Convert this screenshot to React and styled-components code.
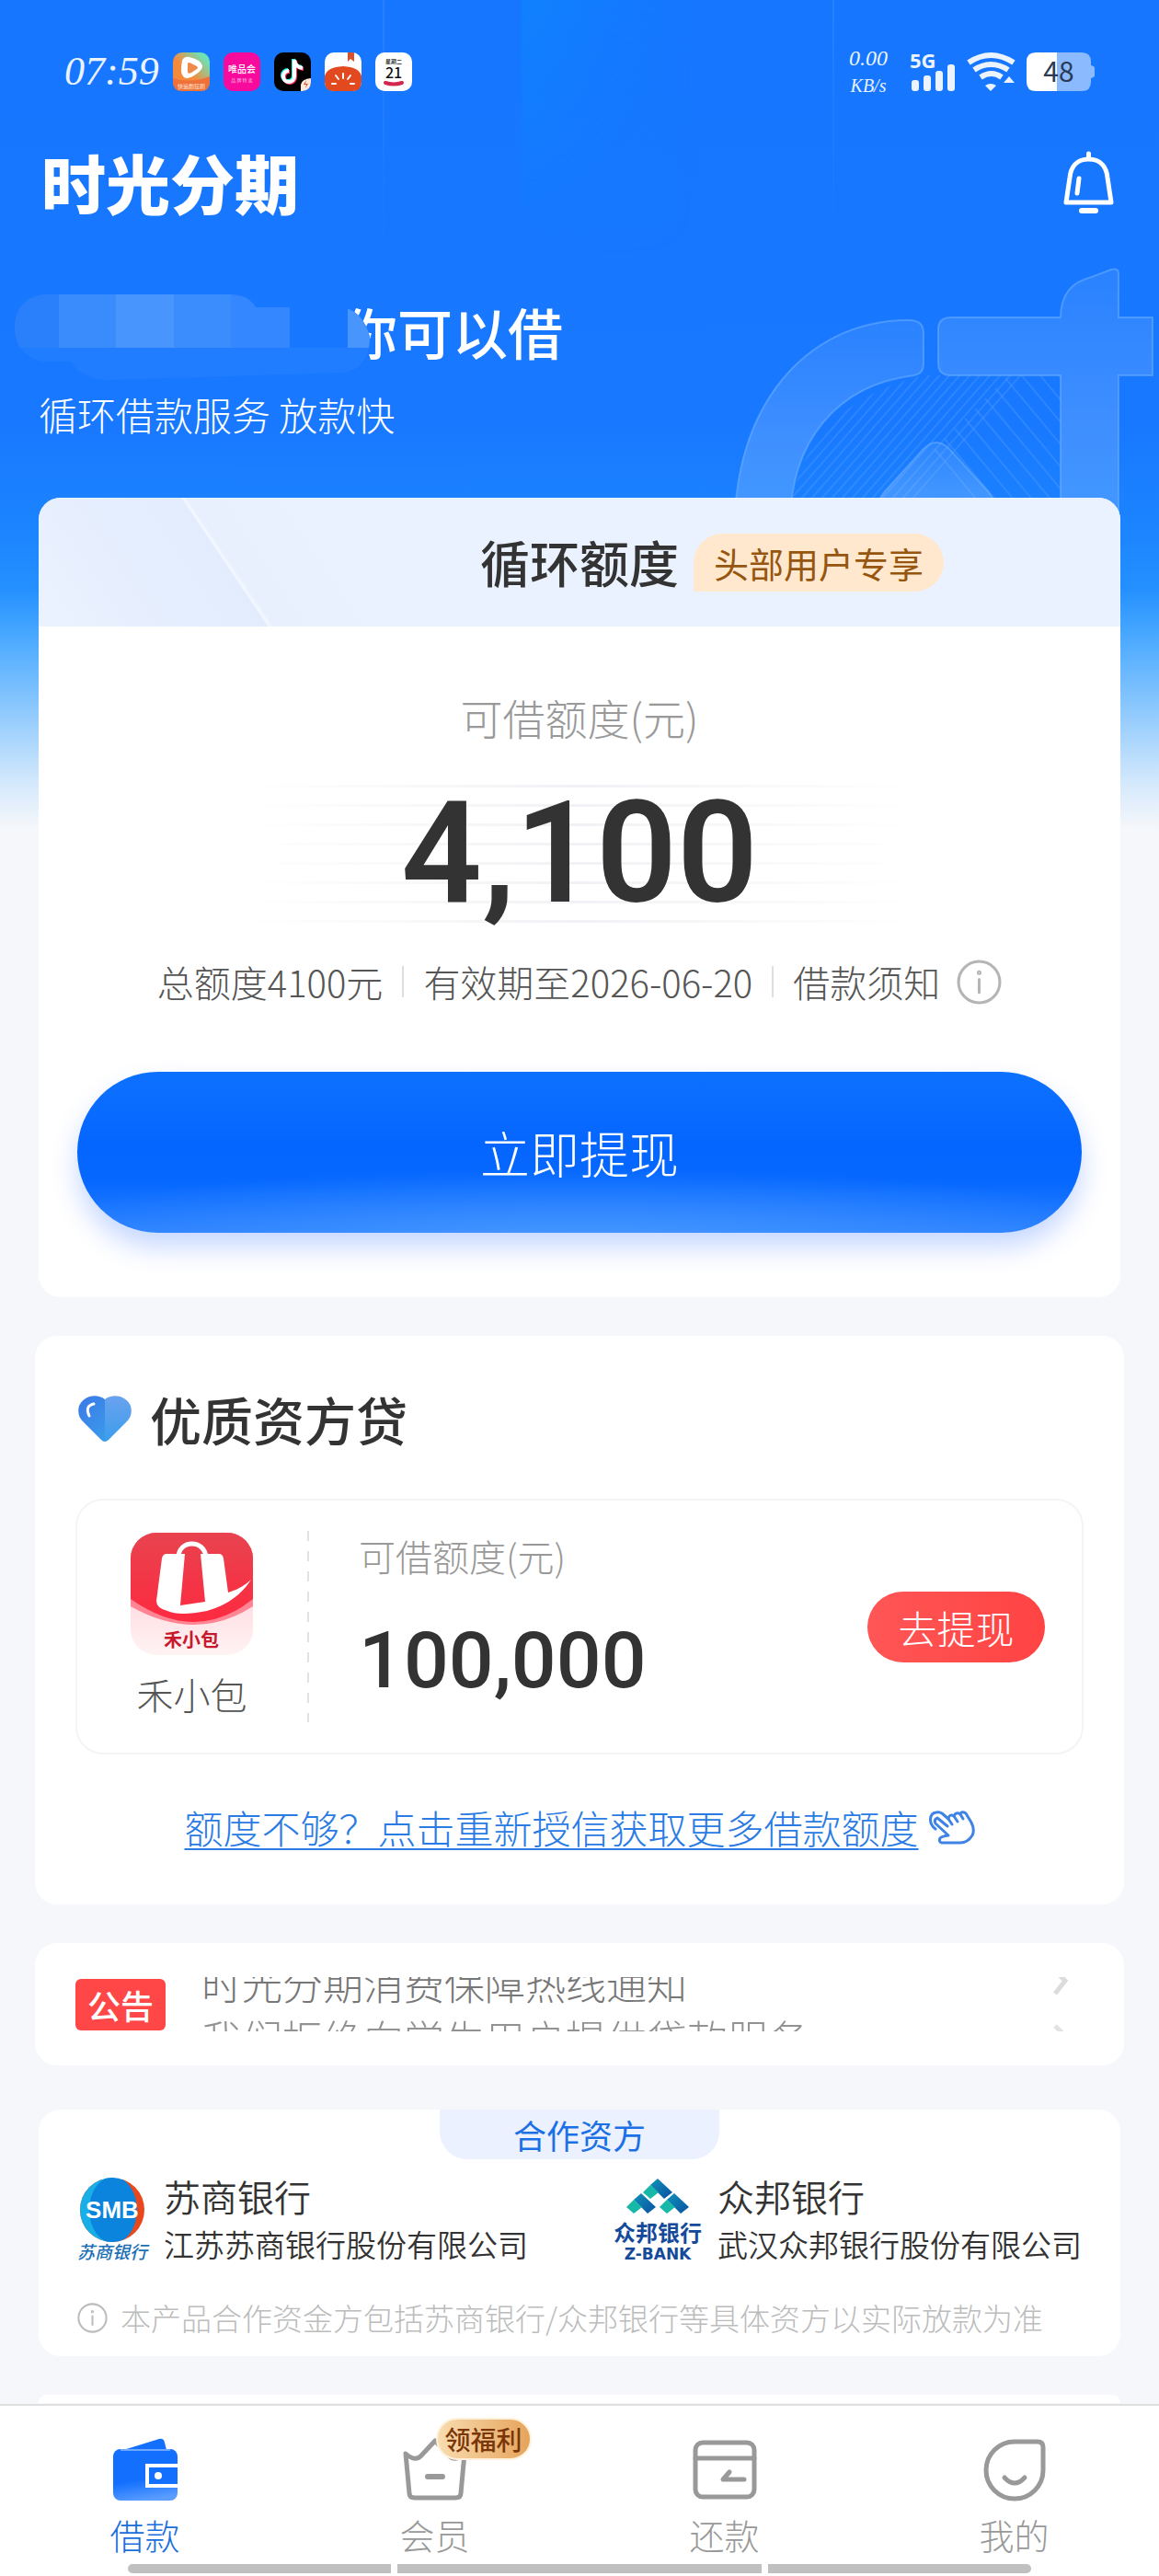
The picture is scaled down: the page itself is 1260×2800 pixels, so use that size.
import React from 'react';
import styled, { createGlobalStyle } from 'styled-components';

const GlobalStyle = createGlobalStyle`
  * {
    box-sizing: border-box;
  }

  body {
    margin: 0;
    background: #f5f7fa;
    color: #333333;
    font-family: 'Noto Sans CJK SC', sans-serif;
  }

  h1, h2, p {
    margin: 0;
    font-weight: 400;
  }

  a {
    color: inherit;
    text-decoration: none;
  }

  button {
    padding: 0;
    border: 0;
    background: none;
    color: inherit;
    font: inherit;
    cursor: pointer;
  }

  svg {
    display: block;
    flex: none;
    overflow: visible;
  }
`;

/* ---------- icons ---------- */

function VideoAppIcon() {
  return (
    <svg width="40" height="42" viewBox="0 0 40 42">
      <defs>
        <linearGradient id="video" x1="0" y1="1" x2="1" y2="0">
          <stop offset="0.45" stopColor="#f58a3c" />
          <stop offset="0.85" stopColor="#6fe0b4" />
        </linearGradient>
      </defs>
      <rect width="40" height="42" rx="10" fill="url(#video)" />
      <path d="M0 28q20 6 40-2v6q0 10-10 10H10Q0 42 0 32z" fill="#f0703a" />
      <path d="M10 9q2-5 8-4 12 3 14 9 1 4-6 9-9 7-14 4-5-4-2-18z" fill="#fff" />
      <path d="M16 12q1-2 4 0l6 3q2 2 0 3l-6 4q-4 2-4-1z" fill="#f08a4a" />
      <text x="20" y="39" textAnchor="middle" fontSize="6" fill="#ffe6d2">快追剧狂刷</text>
    </svg>
  );
}

function VipAppIcon() {
  return (
    <svg width="40" height="42" viewBox="0 0 40 42">
      <rect width="40" height="42" rx="10" fill="#f80a9c" />
      <text x="20" y="22" textAnchor="middle" fontSize="10" fontWeight="500" fill="#fff">唯品会</text>
      <text x="20" y="32" textAnchor="middle" fontSize="5" fill="#ffc4ea">品 牌 特 卖</text>
    </svg>
  );
}

function TiktokAppIcon() {
  const note = 'M22 8v18a6 6 0 1 1-6-6M22 8q1 8 9 9';
  return (
    <svg width="40" height="42" viewBox="0 0 40 42" fill="none" strokeWidth="4">
      <rect width="40" height="42" rx="10" fill="#000" />
      <path d={note} stroke="#25f4ee" transform="translate(-1 -1)" />
      <path d={note} stroke="#fe2c55" transform="translate(1 1)" />
      <path d={note} stroke="#fff" />
      <path d="M29 42v-7q1-6 11-7v4q0 9-9 10z" fill="#ffe9dd" />
      <path d="M35 30l-3 5h3l-1 4 3-5h-3z" fill="#e0522e" />
    </svg>
  );
}

function TomatoAppIcon() {
  return (
    <svg width="40" height="42" viewBox="0 0 40 42">
      <rect width="40" height="42" rx="10" fill="#fff" />
      <path d="M25 0h7v10l-4-3-3 3z" fill="#d8502c" />
      <path d="M0 26q2-10 20-11 18 1 20 11v6q0 10-10 10H10Q0 42 0 32z" fill="#e2491f" />
      <g stroke="#fff" strokeWidth="2" strokeLinecap="round">
        <path d="M20 23v5M12 25l3 4M28 25l-3 4M8 34h4M28 34h4" />
      </g>
    </svg>
  );
}

function CalendarAppIcon() {
  return (
    <svg width="40" height="42" viewBox="0 0 40 42">
      <rect width="40" height="42" rx="10" fill="#fff" />
      <text x="20" y="12" textAnchor="middle" fontSize="6" fontWeight="500" fill="#222">星期二</text>
      <text x="20" y="28" textAnchor="middle" fontSize="16" fontWeight="500" fill="#111">21</text>
      <path d="M11 33q9 3 18 0" stroke="#d3274f" strokeWidth="4" strokeLinecap="round" fill="none" />
    </svg>
  );
}

function SignalIcon() {
  return (
    <svg width="50" height="42" viewBox="0 0 50 42" fill="#eaf3ff">
      <text x="0" y="17" fontSize="22" fontWeight="700" fontFamily="'Open Sans', sans-serif">5G</text>
      <rect x="2" y="30" width="8" height="12" rx="3" />
      <rect x="15" y="25" width="8" height="17" rx="3" />
      <rect x="28" y="20" width="8" height="22" rx="3" />
      <rect x="41" y="13" width="8" height="29" rx="3" />
    </svg>
  );
}

function WifiIcon() {
  return (
    <svg width="53" height="42" viewBox="0 0 53 42" fill="none" stroke="#eaf3ff" strokeWidth="6">
      <path d="M2 11q24-16 49 0" />
      <path d="M8 19q18-12 37 0" />
      <path d="M15 27q12-8 23 0" />
      <path d="M20 36q6-4 12 0l-6 6z" fill="#eaf3ff" stroke="none" />
      <path d="M46 26l6 7H40z" fill="#eaf3ff" stroke="none" />
    </svg>
  );
}

function BatteryIcon() {
  return (
    <svg width="74" height="42" viewBox="0 0 74 42">
      <path d="M33 0h27q10 0 10 10v4q4 1 4 3v8q0 2-4 3v4q0 10-10 10H33z" fill="#8bbaff" />
      <path d="M33 0H10Q0 0 0 10v22q0 10 10 10h23z" fill="#fff" />
      <text x="35" y="32" textAnchor="middle" fontSize="30" fill="#2b3a55">48</text>
    </svg>
  );
}

function BellIcon() {
  return (
    <svg width="55" height="68" viewBox="0 0 55 68" fill="none" stroke="#fff" strokeWidth="5" strokeLinecap="round" strokeLinejoin="round">
      <path d="M27.500 3v5" />
      <path d="M27.500 9C14 9 8 18 7 29L3 56h49l-4-27C47 18 41 9 27.500 9z" />
      <path d="M17 30l-2 16" />
      <path d="M20 65h15" strokeWidth="6" />
    </svg>
  );
}

function InfoIcon({ size, color }) {
  return (
    <svg width={size} height={size} viewBox="0 0 48 48" fill="none" stroke={color} strokeWidth="3" strokeLinecap="round">
      <circle cx="24" cy="24" r="22" />
      <path d="M24 21v14" />
      <circle cx="24" cy="14" r="1" />
    </svg>
  );
}

function HeartIcon() {
  return (
    <svg width="58" height="50" viewBox="0 0 58 50">
      <defs>
        <linearGradient id="heartLeft" x1="0" y1="0" x2="0.600" y2="1">
          <stop offset="0" stopColor="#3c78e6" />
          <stop offset="1" stopColor="#3a97ea" />
        </linearGradient>
        <linearGradient id="heartRight" x1="0" y1="0" x2="0" y2="1">
          <stop offset="0" stopColor="#6aa2ee" />
          <stop offset="1" stopColor="#3a9dec" />
        </linearGradient>
      </defs>
      <path d="M29 4C20-3 6 0 1 11c-2 8 0 13 5 18l19 19q2 2 4 2z" fill="url(#heartLeft)" />
      <path d="M29 4c9-7 23-4 28 7 2 8 0 13-5 18L33 48q-2 2-4 2z" fill="url(#heartRight)" />
      <path d="M17 9q-10 2-5 13" fill="none" stroke="#fff" strokeWidth="3" strokeLinecap="round" />
    </svg>
  );
}

function BagLogo() {
  return (
    <svg width="133" height="133" viewBox="0 0 133 133">
      <defs>
        <clipPath id="bagClip">
          <rect width="133" height="133" rx="28" />
        </clipPath>
        <linearGradient id="bagRed" x1="0" y1="0" x2="0" y2="1">
          <stop offset="0" stopColor="#e8434f" />
          <stop offset="1" stopColor="#fd2a40" />
        </linearGradient>
        <linearGradient id="bagPink" x1="0" y1="0" x2="0" y2="1">
          <stop offset="0.600" stopColor="#ffdfe3" />
          <stop offset="1" stopColor="#fff3f4" />
        </linearGradient>
      </defs>
      <g clipPath="url(#bagClip)">
        <rect width="133" height="133" fill="url(#bagPink)" />
        <path d="M0 0h133v80q-62 40-133 0z" fill="#ff8494" />
        <path d="M0 0h133v72q-62 50-133 0z" fill="url(#bagRed)" />
        <path d="M52 27c0-20 29-20 30 0" fill="none" stroke="#fff" strokeWidth="5" />
        <path d="M39 23h20l-5 56 27-4-5-52h20q4 0 5 5l5 37q14-4 25-14-16 25-48 34-30 6-43 0-12-3-12-11l6-46q1-5 5-5z" fill="#fff" />
      </g>
      <text x="66" y="124" textAnchor="middle" fontSize="20" fontWeight="700" fill="#c9182b">禾小包</text>
    </svg>
  );
}

function HandIcon() {
  return (
    <svg width="50" height="37" viewBox="0 0 50 37" fill="none" stroke="#3f83e6" strokeWidth="3" strokeLinecap="round" strokeLinejoin="round">
      <path d="M7 20C-1 14 0 3 8 2q3-1 6 1l7 6q1-6 6-3 2-5 7-2 1-4 6-1l6 10q4 8 1 14-5 8-13 8H14q-4-1-2-5 2-2 9-3L7 14q-2-4 2-6l11 9" />
      <path d="M21 9l4 6M27 6l4 6M34 4l3 5" />
    </svg>
  );
}

function SmbLogo() {
  return (
    <svg width="78" height="90" viewBox="0 0 78 90">
      <defs>
        <clipPath id="smbClip">
          <circle cx="38" cy="33" r="35" />
        </clipPath>
      </defs>
      <g clipPath="url(#smbClip)">
        <rect width="78" height="70" fill="#e8481c" />
        <ellipse cx="30" cy="33" rx="30" ry="37" fill="#18aee8" />
        <ellipse cx="39" cy="33" rx="26" ry="36" fill="#0a84dc" />
      </g>
      <text x="38" y="42" textAnchor="middle" fontSize="26" fontWeight="700" fontFamily="'Liberation Sans', sans-serif" fill="#fff">SMB</text>
      <text x="38" y="86" textAnchor="middle" fontSize="19" fontStyle="italic" fontWeight="500" fill="#1a6fb4">苏商银行</text>
    </svg>
  );
}

function ZBankLogo() {
  return (
    <svg width="98" height="88" viewBox="0 0 98 88">
      <defs>
        <linearGradient id="roofBlue" x1="0" y1="0" x2="1" y2="1">
          <stop offset="0" stopColor="#0f93b8" />
          <stop offset="1" stopColor="#0b4fa2" />
        </linearGradient>
        <g id="roof">
          <path d="M16 0L32 15l-9 7L8 7z" fill="url(#roofBlue)" />
          <path d="M8 7l9 8-9 7-8-7z" fill="#17b8a8" />
        </g>
      </defs>
      <use href="#roof" x="33" y="-2" />
      <use href="#roof" x="15" y="14" />
      <use href="#roof" x="51" y="14" />
      <text x="49" y="66" textAnchor="middle" fontSize="24" fontWeight="700" fill="#154a9a">众邦银行</text>
      <text x="49" y="86" textAnchor="middle" fontSize="17" fontWeight="700" fontFamily="'DejaVu Sans', sans-serif" fill="#154a9a">Z-BANK</text>
    </svg>
  );
}

function WalletIcon() {
  return (
    <svg width="70" height="68" viewBox="0 0 70 68">
      <defs>
        <linearGradient id="wallet" x1="0.300" y1="0" x2="0.500" y2="1">
          <stop offset="0.600" stopColor="#1370ff" />
          <stop offset="1" stopColor="#5a9dff" />
        </linearGradient>
      </defs>
      <path d="M8 14L50 1q5-1 6 4l3 12z" fill="#1370ff" />
      <rect y="12" width="70" height="56" rx="8" fill="url(#wallet)" />
      <path d="M8 13h54" stroke="#6fa8ff" strokeWidth="2" />
      <path d="M70 30H37v22h33" fill="#1370ff" stroke="#fff" strokeWidth="4" />
      <circle cx="49" cy="41" r="4" fill="#fff" />
    </svg>
  );
}

function CrownIcon() {
  return (
    <svg width="70" height="68" viewBox="0 0 70 68" fill="none" stroke="#999" strokeWidth="5" strokeLinecap="round" strokeLinejoin="round">
      <path d="M3 17q11 10 18 1L35 3l14 15q7 9 18-1l-4 43q0 5-6 5H13q-6 0-6-5z" />
      <path d="M27 42h16" strokeWidth="6" />
    </svg>
  );
}

function RepayIcon() {
  return (
    <svg width="70" height="68" viewBox="0 0 70 68" fill="none" stroke="#999" strokeWidth="5" strokeLinecap="round" strokeLinejoin="round">
      <rect x="3" y="5" width="64" height="59" rx="8" />
      <path d="M3 22h64" />
      <path d="M40 37l-7 8h23" />
    </svg>
  );
}

function MineIcon() {
  return (
    <svg width="70" height="68" viewBox="0 0 70 68" fill="none" stroke="#999" strokeWidth="5" strokeLinecap="round" strokeLinejoin="round">
      <path d="M35 4h25q6 0 6 6v25A31 31 0 1 1 35 4z" />
      <path d="M24 43q11 12 22 0" />
    </svg>
  );
}

function ArrowIcon() {
  return (
    <svg width="18" height="30" viewBox="0 0 18 30" fill="none" stroke="#dcdcdc" strokeWidth="5">
      <path d="M3 2l11 11L3 27" />
    </svg>
  );
}

function HeroArt() {
  const lines = Array.from({ length: 16 }, (_, i) => i * 11);
  return (
    <svg width="480" height="280" viewBox="0 0 480 280">
      <defs>
        <linearGradient id="glass" x1="0" y1="0" x2="0" y2="1">
          <stop offset="0" stopColor="#fff" stopOpacity="0.080" />
          <stop offset="0.600" stopColor="#fff" stopOpacity="0.170" />
        </linearGradient>
        <clipPath id="artInner">
          <path d="M79 281Q90 162 224 128h149v153z" />
        </clipPath>
      </defs>
      <g clipPath="url(#artInner)" stroke="#4a96ff" strokeOpacity="0.450" strokeWidth="2">
        {lines.map((n) => (
          <path key={`a${n}`} d={`M${40 + n} 270L${180 + n} 110`} />
        ))}
        {lines.map((n) => (
          <path key={`b${n}`} d={`M${236 + n} ${208 - n}l150 180`} />
        ))}
      </g>
      <g fill="url(#glass)" stroke="#6eaeff" strokeOpacity="0.550" strokeWidth="2">
        <path d="M19 290C19 170 90 68 208 68q16 0 16 14v34q0 10-10 12C130 138 79 200 79 290z" />
        <path d="M254 65h119q0-36 34-44l21-8q8-2 8 4v48h37v63h-37v170h-63V128H254q-14 0-14-13V78q0-13 14-13z" />
        <path d="M172 290q-2-22 10-36l42-46q14-14 28 0l42 46q12 14 10 36z" />
      </g>
    </svg>
  );
}

function Mosaic() {
  return (
    <svg width="386" height="93" viewBox="0 0 386 93">
      <defs>
        <clipPath id="blob">
          <path d="M30 0H234q20 0 28 14h92q24 2 32 32 0 34-28 39l-255 8q-30 0-42-20H30Q0 66 0 36T30 0z" />
        </clipPath>
      </defs>
      <g clipPath="url(#blob)">
        <rect width="386" height="93" fill="#207dff" />
        <rect width="48" height="58" fill="#2a80fb" />
        <rect x="48" width="62" height="58" fill="#3a8bfc" />
        <rect x="110" width="63" height="58" fill="#4795fd" />
        <rect x="173" width="62" height="58" fill="#3b8dfe" />
        <rect x="235" width="64" height="58" fill="#3487fe" />
        <rect x="299" width="63" height="58" fill="#1877ff" />
        <rect x="362" width="24" height="58" fill="#4795fd" />
      </g>
    </svg>
  );
}

/* ---------- layout ---------- */

const Page = styled.div`
  position: relative;
  display: flex;
  flex-direction: column;
  min-height: 100vh;
  overflow: hidden;
  background:
    linear-gradient(to bottom, #1676ff 0, #1878ff 460px, #1c85ff 580px, #2490ff 640px, #48a8ff 690px, #8cc8fd 770px, #d3e8fc 850px, #f5f7fa 900px)
    no-repeat 0 0 / 100% 900px,
    #f5f7fa;
`;

const Backdrop = styled.div`
  position: absolute;
  top: 0;
  left: 33%;
  width: 39%;
  height: 280px;
  border: solid rgba(255, 255, 255, 0.08);
  border-width: 0 2px;
  background: linear-gradient(to right, transparent 30%, rgba(0, 160, 255, 0.25) 31%, transparent 70%);
  mask-image: linear-gradient(to bottom, #000, transparent);
`;

const ArtLayer = styled.div`
  position: absolute;
  top: 280px;
  right: 0;
`;

const StatusBar = styled.div`
  position: relative;
  display: flex;
  align-items: center;
  justify-content: space-between;
  height: 156px;
  padding: 0 70px;
  color: #eaf3ff;
`;

const StatusGroup = styled.div`
  display: flex;
  align-items: center;
  gap: ${(props) => props.$gap}px;
`;

const Clock = styled.time`
  font: italic 44px/48px 'Liberation Serif', serif;
`;

const NetSpeed = styled.div`
  margin-right: 12px;
  font: italic 24px/30px 'Liberation Serif', serif;
  text-align: center;

  small {
    display: block;
    font-size: 20px;
  }
`;

const Header = styled.header`
  position: relative;
  padding: 0 42px;
  color: #fff;
`;

const TopRow = styled.div`
  display: flex;
  align-items: center;
  justify-content: space-between;
  height: 84px;
  padding: 0 7px 0 3px;
`;

const Brand = styled.p`
  font-size: 70px;
  font-weight: 900;
  line-height: 80px;
`;

const Greeting = styled.div`
  display: flex;
  align-items: flex-start;
  margin: 80px 0 0 -26px;

  svg {
    position: relative;
    z-index: 1;
  }
`;

const GreetingText = styled.h1`
  margin-left: -30px;
  font-size: 60px;
  font-weight: 500;
  line-height: 80px;
`;

const Slogan = styled.p`
  margin-top: 8px;
  font-size: 42px;
  font-weight: 300;
  line-height: 58px;
`;

const Card = styled.section`
  position: relative;
  margin: ${(props) => props.$top}px ${(props) => (props.$wide ? 38 : 42)}px 0;
  border-radius: 24px;
  background: #fff;
  overflow: hidden;
`;

const CardHead = styled.div`
  display: grid;
  grid-template-columns: 1fr auto 1fr;
  align-items: center;
  gap: 16px;
  height: 140px;
  background:
    linear-gradient(56deg, #ebf2ff, #e2ecfd 206px, #f4f8ff 208px, #e8f0fe 212px, #ebf2ff 380px);
`;

const CardTitle = styled.h2`
  grid-column: ${(props) => (props.$middle ? 2 : 'auto')};
  font-size: ${(props) => (props.$middle ? 54 : 56)}px;
  font-weight: 500;
  line-height: 72px;
`;

const VipBadge = styled.span`
  justify-self: start;
  padding: 0 22px;
  border-radius: 32px 32px 32px 0;
  background: #ffe8cd;
  color: #96560f;
  font-size: 38px;
  line-height: 63px;
`;

const QuotaBody = styled.div`
  display: flex;
  flex-direction: column;
  align-items: center;
  padding: 64px 42px 70px;
`;

const Label = styled.p`
  color: #999;
  font-size: ${(props) => (props.$large ? 46 : 40)}px;
  font-weight: 300;
  line-height: 68px;
`;

const Amount = styled.p`
  width: 720px;
  max-width: 100%;
  margin-top: 40px;
  background:
    linear-gradient(to right, #fff, transparent 50%, #fff),
    repeating-linear-gradient(to bottom, #f1f2f5 0, #f1f2f5 3px, transparent 3px, transparent 21px);
  font-family: Roboto, sans-serif;
  font-size: 154px;
  font-weight: 600;
  line-height: 150px;
  text-align: center;
`;

const QuotaFacts = styled.div`
  display: flex;
  align-items: center;
  gap: 21px;
  margin-top: 36px;
  color: #555;
  font-size: 40px;
  font-weight: 300;
  line-height: 56px;
  white-space: nowrap;
`;

const Bar = styled.i`
  width: 2px;
  height: 34px;
  background: #dedede;
`;

const NoticeLink = styled.a`
  display: flex;
  align-items: center;
  gap: 18px;
`;

const WithdrawButton = styled.button`
  width: 100%;
  height: 175px;
  margin-top: 70px;
  border-radius: 88px;
  background:
    radial-gradient(ellipse 60% 45% at 50% 105%, rgba(76, 156, 255, 0.8), transparent),
    linear-gradient(to bottom, #0d71ff, #0566ff 45%, #0668ff 68%, #2a80ff);
  box-shadow: 0 16px 28px rgba(30, 100, 255, 0.25);
  color: #fff;
  font-size: 54px;
  font-weight: 300;
`;

const LenderBody = styled.div`
  padding: 54px 44px;
`;

const LenderHead = styled.div`
  display: flex;
  align-items: center;
  gap: 20px;
  padding-left: 3px;
`;

const Lender = styled.div`
  display: flex;
  align-items: center;
  height: 278px;
  margin-top: 51px;
  padding: 0 40px 0 58px;
  border: 2px solid #f4f4f4;
  border-radius: 30px;
`;

const LenderBrand = styled.div`
  display: flex;
  flex-direction: column;
  align-items: center;
  gap: 12px;
  color: #555;
  font-size: 40px;
  font-weight: 300;
  line-height: 60px;
`;

const DashedLine = styled.i`
  width: 2px;
  height: 208px;
  margin: 0 54px 0 59px;
  background: repeating-linear-gradient(to bottom, #e2e2e2 0, #e2e2e2 11px, transparent 11px, transparent 22px);
`;

const LenderQuota = styled.div`
  flex: 1;
  padding-bottom: 24px;
`;

const LenderAmount = styled.p`
  margin-top: 30px;
  font-family: Roboto, sans-serif;
  font-size: 86px;
  font-weight: 500;
  line-height: 100px;
`;

const RedButton = styled.button`
  width: 193px;
  height: 77px;
  border-radius: 39px;
  background: linear-gradient(to right, #ff5656, #ff4343);
  color: #fff;
  font-size: 42px;
  font-weight: 300;
`;

const MoreLink = styled.a`
  display: flex;
  align-items: center;
  justify-content: center;
  gap: 11px;
  margin-top: 49px;
  color: #2a7be4;
  font-size: 42px;
  font-weight: 300;
  line-height: 60px;

  span {
    text-decoration: underline;
    text-decoration-thickness: 2px;
    text-underline-offset: 5px;
  }
`;

const News = styled.div`
  display: flex;
  align-items: center;
  gap: 39px;
  padding: 37px 60px 37px 44px;
`;

const NewsTag = styled.span`
  width: 98px;
  border-radius: 6px;
  background: #ff4747;
  color: #fff;
  font-size: 36px;
  font-weight: 500;
  line-height: 56px;
  text-align: center;
`;

const NewsWindow = styled.div`
  flex: 1;
  height: 59px;
  overflow: hidden;
`;

const NewsTrack = styled.div`
  margin-top: -24px;
`;

const NewsLine = styled.a`
  display: flex;
  align-items: center;
  justify-content: space-between;
  height: 60px;
  color: #777;
  font-size: 44px;
  font-weight: 300;
  line-height: 60px;
  opacity: ${(props) => (props.$faded ? 0.8 : 1)};
`;

const Partners = styled.div`
  padding: 0 42px 16px;
`;

const PartnersTab = styled.h2`
  width: 304px;
  margin: 0 auto;
  border-radius: 0 0 30px 30px;
  background: #ebf1fe;
  color: #1b70e6;
  font-size: 36px;
  line-height: 54px;
  text-align: center;
`;

const BankRow = styled.div`
  display: flex;
  justify-content: space-between;
  margin-top: 15px;
`;

const Bank = styled.div`
  display: flex;
  align-items: center;
  gap: 16px;
`;

const BankName = styled.p`
  font-size: 40px;
  font-weight: 350;
  line-height: 50px;
  white-space: nowrap;

  small {
    display: block;
    font-size: 33px;
    line-height: 54px;
  }
`;

const Disclaimer = styled.p`
  display: flex;
  align-items: center;
  gap: 14px;
  margin-top: 27px;
  color: #bcbcbc;
  font-size: 33px;
  font-weight: 300;
  line-height: 52px;
  white-space: nowrap;
`;

const NextCard = styled.div`
  height: 9px;
  margin: 42px 42px 0;
  border-radius: 24px 24px 0 0;
  background: #fff;
`;

const TabBar = styled.nav`
  position: relative;
  margin-top: auto;
  border-top: 2px solid #dfdfdf;
  background: #fff;
`;

const Tabs = styled.div`
  display: grid;
  grid-template-columns: repeat(4, 1fr);
`;

const Tab = styled.a`
  display: flex;
  flex-direction: column;
  align-items: center;
  gap: 8px;
  padding-top: 35px;
  color: ${(props) => (props.$active ? '#1b6fdc' : '#999')};
  font-size: 38px;
  font-weight: 300;
  line-height: 58px;
`;

const TabIcon = styled.span`
  position: relative;
`;

const TabBadge = styled.span`
  position: absolute;
  top: -22px;
  left: 36px;
  padding: 0 8px;
  border: 2px solid #fff1dc;
  border-radius: 24px;
  background: linear-gradient(to right, #f8dcb0, #e6a45c);
  color: #7a3608;
  font-size: 28px;
  font-weight: 500;
  line-height: 42px;
  white-space: nowrap;
`;

const HomeIndicator = styled.div`
  display: flex;
  gap: 7px;
  margin: 3px 139px;

  i {
    flex: 286;
    height: 10px;
    background: #c0c0c0;
  }

  i:first-child {
    border-radius: 5px 0 0 5px;
  }

  i:nth-child(2) {
    flex: 395;
  }

  i:last-child {
    border-radius: 0 5px 5px 0;
  }
`;

const news = ['时光分期消费保障热线通知', '我们拒绝向学生用户提供贷款服务'];

const banks = [
  { name: '苏商银行', company: '江苏苏商银行股份有限公司', logo: <SmbLogo /> },
  { name: '众邦银行', company: '武汉众邦银行股份有限公司', logo: <ZBankLogo /> },
];

const tabs = [
  { name: '借款', icon: <WalletIcon />, active: true },
  { name: '会员', icon: <CrownIcon />, badge: '领福利' },
  { name: '还款', icon: <RepayIcon /> },
  { name: '我的', icon: <MineIcon /> },
];

export default function App() {
  return (
    <Page>
      <GlobalStyle />
      <Backdrop />
      <ArtLayer>
        <HeroArt />
      </ArtLayer>

      <StatusBar>
        <StatusGroup $gap={15}>
          <Clock>07:59</Clock>
          <VideoAppIcon />
          <VipAppIcon />
          <TiktokAppIcon />
          <TomatoAppIcon />
          <CalendarAppIcon />
        </StatusGroup>
        <StatusGroup $gap={12}>
          <NetSpeed>
            0.00
            <small>KB/s</small>
          </NetSpeed>
          <SignalIcon />
          <WifiIcon />
          <BatteryIcon />
        </StatusGroup>
      </StatusBar>

      <Header>
        <TopRow>
          <Brand>时光分期</Brand>
          <button type="button" aria-label="消息">
            <BellIcon />
          </button>
        </TopRow>
        <Greeting>
          <Mosaic />
          <GreetingText>你可以借</GreetingText>
        </Greeting>
        <Slogan>循环借款服务 放款快</Slogan>
      </Header>

      <Card $top={62}>
        <CardHead>
          <CardTitle $middle>循环额度</CardTitle>
          <VipBadge>头部用户专享</VipBadge>
        </CardHead>
        <QuotaBody>
          <Label $large>可借额度(元)</Label>
          <Amount>4,100</Amount>
          <QuotaFacts>
            <span>总额度4100元</span>
            <Bar />
            <span>有效期至2026-06-20</span>
            <Bar />
            <NoticeLink href="#notice">
              借款须知
              <InfoIcon size={49} color="#b5b5b5" />
            </NoticeLink>
          </QuotaFacts>
          <WithdrawButton type="button">立即提现</WithdrawButton>
        </QuotaBody>
      </Card>

      <Card $top={42} $wide>
        <LenderBody>
          <LenderHead>
            <HeartIcon />
            <CardTitle>优质资方贷</CardTitle>
          </LenderHead>
          <Lender>
            <LenderBrand>
              <BagLogo />
              禾小包
            </LenderBrand>
            <DashedLine />
            <LenderQuota>
              <Label>可借额度(元)</Label>
              <LenderAmount>100,000</LenderAmount>
            </LenderQuota>
            <RedButton type="button">去提现</RedButton>
          </Lender>
          <MoreLink href="#credit">
            <span>额度不够？点击重新授信获取更多借款额度</span>
            <HandIcon />
          </MoreLink>
        </LenderBody>
      </Card>

      <Card $top={42} $wide>
        <News>
          <NewsTag>公告</NewsTag>
          <NewsWindow>
            <NewsTrack>
              {news.map((title, i) => (
                <NewsLine key={title} href="#news" $faded={i > 0}>
                  {title}
                  <ArrowIcon />
                </NewsLine>
              ))}
            </NewsTrack>
          </NewsWindow>
        </News>
      </Card>

      <Card $top={48}>
        <Partners>
          <PartnersTab>合作资方</PartnersTab>
          <BankRow>
            {banks.map((bank) => (
              <Bank key={bank.name}>
                {bank.logo}
                <BankName>
                  {bank.name}
                  <small>{bank.company}</small>
                </BankName>
              </Bank>
            ))}
          </BankRow>
          <Disclaimer>
            <InfoIcon size={33} color="#bcbcbc" />
            本产品合作资金方包括苏商银行/众邦银行等具体资方以实际放款为准
          </Disclaimer>
        </Partners>
      </Card>
      <NextCard />

      <TabBar>
        <Tabs>
          {tabs.map((tab) => (
            <Tab key={tab.name} href="#tab" $active={tab.active}>
              <TabIcon>
                {tab.icon}
                {tab.badge && <TabBadge>{tab.badge}</TabBadge>}
              </TabIcon>
              {tab.name}
            </Tab>
          ))}
        </Tabs>
        <HomeIndicator>
          <i />
          <i />
          <i />
        </HomeIndicator>
      </TabBar>
    </Page>
  );
}
